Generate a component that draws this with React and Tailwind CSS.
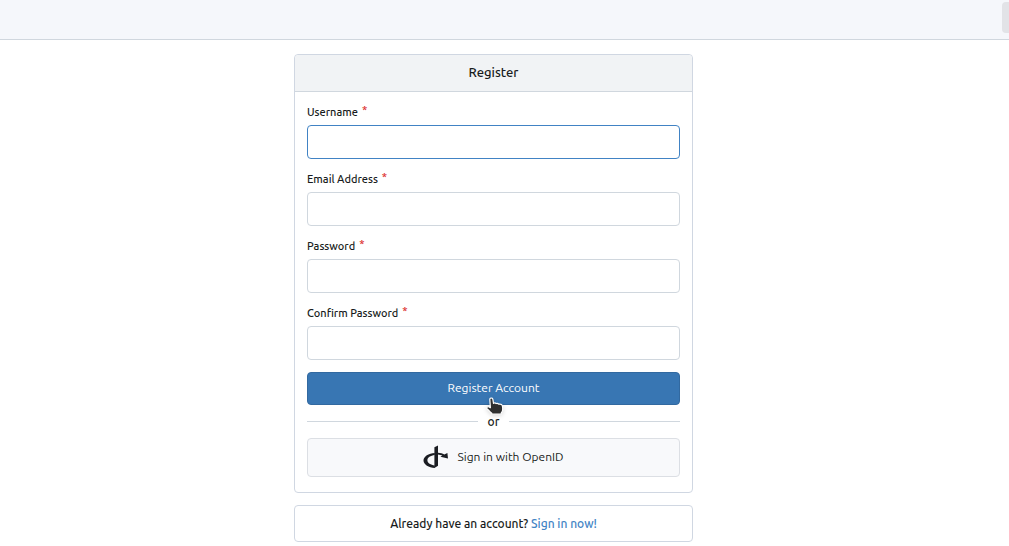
import React from "react";

const fields = [
  { id: "user_name", label: "Username", type: "text", active: true },
  { id: "email", label: "Email Address", type: "email" },
  { id: "password", label: "Password", type: "password" },
  { id: "retype", label: "Confirm Password", type: "password" },
];

function OpenIdIcon() {
  return (
    <svg viewBox="0 0 26 24" className="h-6 w-[26px]" aria-hidden="true">
      <path d="M11.4 2.2 15 0.6V20.8L11.4 23Z" fill="#1b1d22" />
      <path
        d="M11.8 8V10C7.5 10.5 4.4 12.5 4.400 15.3c0 2.700 3.300 4.700 7.400 5.200v2.500C5.800 22.500 0.500 19.500 0.500 15.400 0.500 11.500 5.600 8.200 11.800 8Z"
        fill="#1b1d22"
      />
      <path
        d="M15 7.700c2.600.2 4.500.8 6.300 1.700l3.100-1.500.6 5.500-7.600-1.700 2-1.100c-1.200-.6-2.700-.9-4.400-1.100Z"
        fill="#1b1d22"
      />
    </svg>
  );
}

function HandCursor() {
  return (
    <svg
      viewBox="0 0 18 20"
      className="pointer-events-none absolute top-6 left-1/2 -ml-2 h-5 w-[18px] drop-shadow-sm"
      aria-hidden="true"
    >
      <path
        d="M4.300 1.300c1-.7 2.400-.1 2.600 1.200L7.500 6.300c.9-.7 2-.5 2.700.3.900-.5 1.900-.2 2.500.6 1.700-.3 3.300.3 3.600 1.500.5 2.200.6 4 0 5.700l-1.100 1.600v1.200H5.800v-1c-2-1.400-3.200-3.200-4.800-4.600-.7-1.500.9-2.500 2.200-1.700l1.200.8-.6-8.200c0-.5.1-.9.500-1.200Z"
        fill="#2f2f2f"
        stroke="#fff"
        strokeWidth="1.2"
        strokeLinejoin="round"
      />
    </svg>
  );
}

function App() {
  const [formData, setFormData] = React.useState({});

  const handleChange = (e) => {
    setFormData((prev) => {
      return { ...prev, [e.target.id]: e.target.value };
    });
  };

  const handleSubmit = (e) => {
    e.preventDefault();
  };

  return (
    <div className="overflow-hidden bg-white font-['Ubuntu','Noto_Sans',sans-serif] text-xs text-[#181c21]">
      <nav className="flex h-10 justify-end border-b border-[#d0d7de] bg-[#f5f7fb] pt-0.5">
        <button
          type="button"
          aria-label="Menu"
          className="h-[31px] w-[7px] rounded-l bg-[#e2e3e7]"
        />
      </nav>

      <main className="pt-3.5 pr-[22px]">
        <div className="mx-auto flex max-w-[399px] flex-col gap-3">
          <section className="rounded border border-[#d0d7e2]">
            <h1 className="rounded-t border-b border-[#d0d7de] bg-[#f1f3f5] pt-[7px] pb-[9px] text-center text-[13px] leading-5 font-medium">
              Register
            </h1>
            <form
              className="flex flex-col px-3 pt-3 pb-[15px]"
              onSubmit={handleSubmit}
            >
              {fields.map((field) => (
                <div key={field.id} className="mb-3">
                  <label
                    htmlFor={field.id}
                    className="mb-1 block text-[11px] leading-[17px] font-medium"
                  >
                    {field.label}
                    <span className="ml-1 align-top leading-3 text-[#db2828]">
                      *
                    </span>
                  </label>
                  <input
                    id={field.id}
                    type={field.type}
                    value={formData[field.id] || ""}
                    onChange={handleChange}
                    required
                    className={`block h-[34px] w-full rounded border px-3 outline-none focus:border-[#4183c4] ${
                      field.active ? "border-[#4183c4]" : "border-[#d0d7de]"
                    }`}
                  />
                </div>
              ))}

              <button
                type="submit"
                className="relative h-[33px] w-full cursor-pointer rounded border border-[#3269a0] bg-[#3876b3] pb-0.5 text-white"
              >
                Register Account
                <HandCursor />
              </button>

              <div className="flex items-center gap-2.5 py-2 leading-[17px] font-medium">
                <span className="h-px flex-1 bg-[#d0d7de]" />
                or
                <span className="h-px flex-1 bg-[#d0d7de]" />
              </div>

              <button
                type="button"
                className="flex h-[39px] w-full cursor-pointer items-center justify-center gap-2 rounded border border-[#dcdfe4] bg-[#f8f9fb] pb-0.5"
              >
                <OpenIdIcon />
                Sign in with OpenID
              </button>
            </form>
          </section>

          <section className="rounded border border-[#d0d7e2] py-2 text-center leading-[19px] font-medium">
            Already have an account?{" "}
            <a href="#login" className="text-[#4183c4]">
              Sign in now!
            </a>
          </section>
        </div>
      </main>
    </div>
  );
}

export default App;
